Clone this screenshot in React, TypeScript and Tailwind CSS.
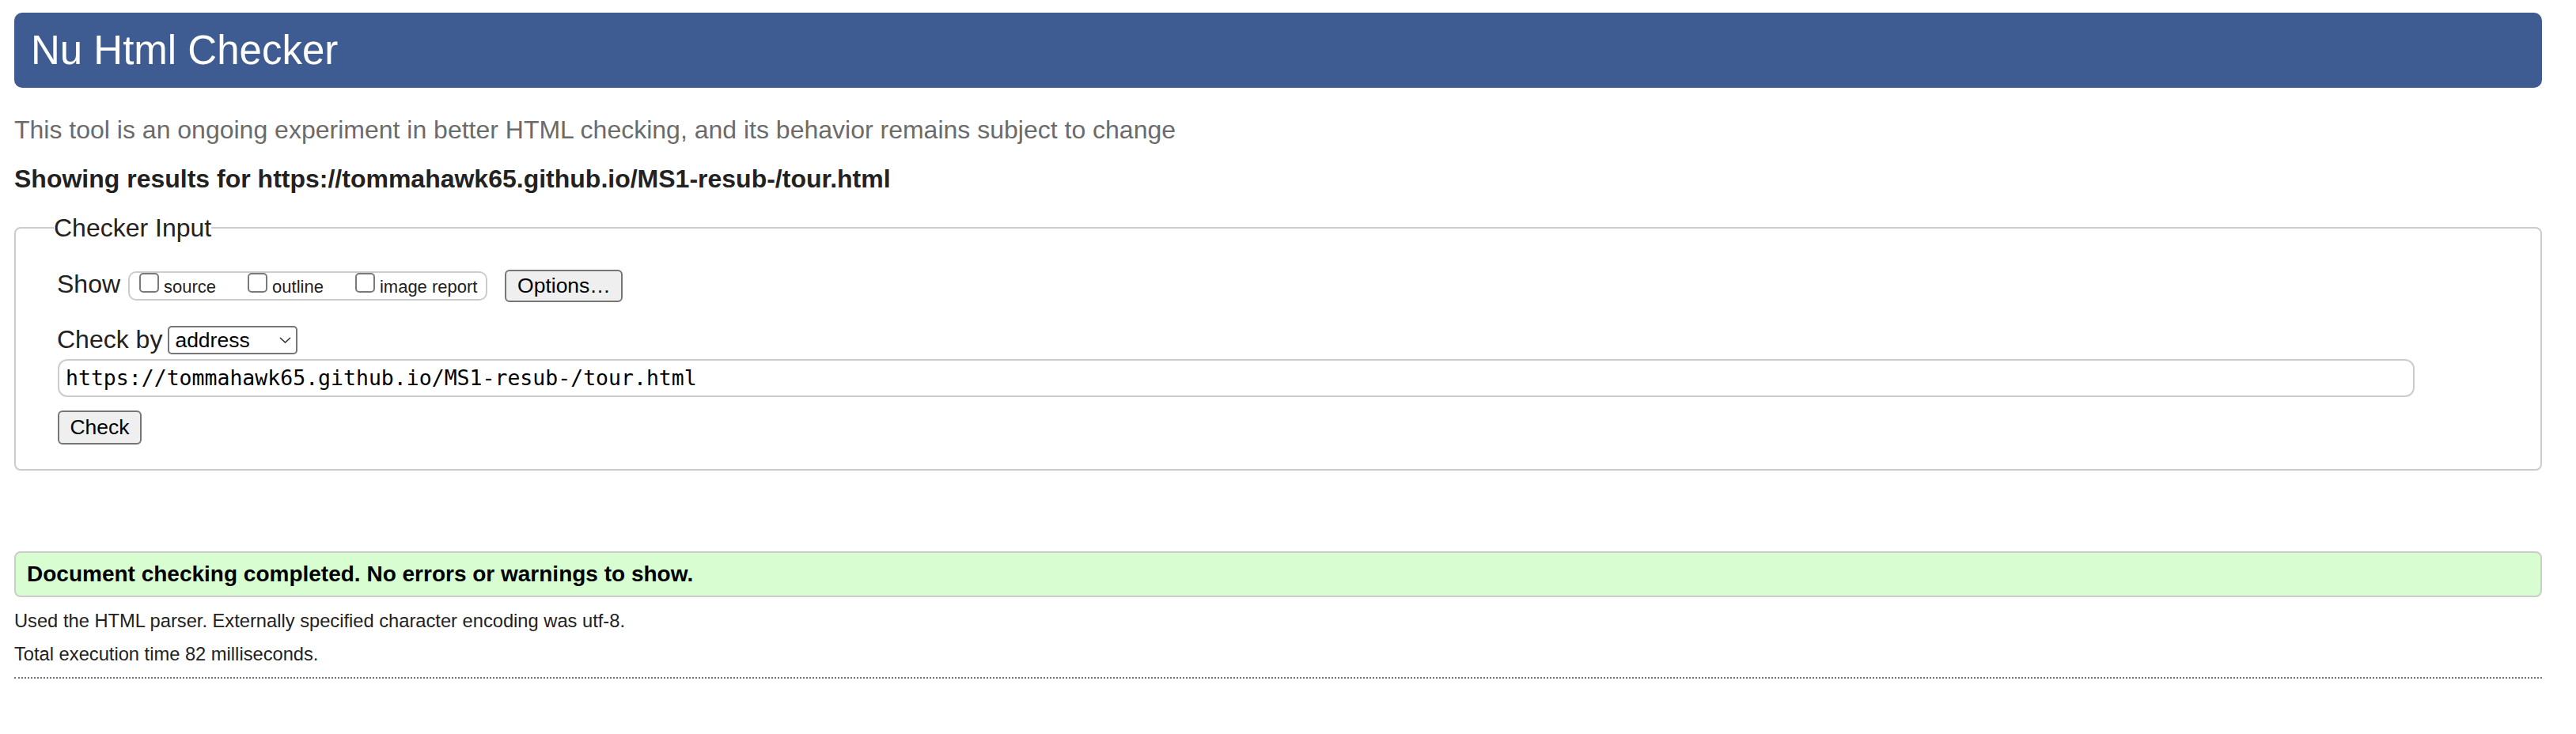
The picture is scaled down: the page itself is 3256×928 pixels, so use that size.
function Box({ label, last }: { label: string; last?: boolean }) {
  return (
    <div className={last ? 'flex items-start' : 'mr-[40px] flex items-start'}>
      <span className="block h-[25px] w-[25px] rounded-[5px] border-2 border-[#7a7a7a] bg-white" />
      <span className="ml-[6px] mt-[5px] text-[22px] leading-[25px] text-[#222]">{label}</span>
    </div>
  )
}

export default function App() {
  return (
    <div className="min-h-screen bg-white font-['Liberation_Sans',Arial,sans-serif] text-[#222]">
      <div className="ml-[18px] w-[3195px] pt-[16px]">
        {/* title bar */}
        <header className="flex h-[95px] items-center rounded-[10px] bg-[#3e5c91] pl-[21px]">
          <h1 className="text-[51px] leading-none text-white">Nu Html Checker</h1>
        </header>

        <p className="mt-[33px] text-[32px] leading-[40px] text-[#6b6b6b]">
          This tool is an ongoing experiment in better HTML checking, and its behavior remains subject to change
        </p>
        <h2 className="mt-[22px] text-[32px] font-bold leading-[40px] text-[#222]">
          Showing results for https://tommahawk65.github.io/MS1-resub-/tour.html
        </h2>

        {/* checker input */}
        <fieldset className="mt-[22px] rounded-[8px] border-2 border-[#ccc] pb-[31px] pl-[48px]">
          <legend className="text-[32px] leading-[40px] text-[#222]">Checker Input</legend>
          <div className="pl-[4px]">
            <div className="mt-[31px] flex items-start">
              <span className="text-[32px] leading-[40px]">Show</span>
              <div className="ml-[10px] mt-[4px] flex h-[37px] items-start rounded-[10px] border-2 border-[#ccc] pl-[12px] pr-[11px]">
                <Box label="source" />
                <Box label="outline" />
                <Box label="image report" last />
              </div>
              <button className="ml-[22px] mt-[2px] h-[41px] w-[149px] rounded-[6px] border-2 border-[#767676] bg-[#efefef] text-[26.5px] leading-none text-black">
                Options…
              </button>
            </div>

            <div className="mt-[27px] flex items-start">
              <span className="text-[32px] leading-[40px]">Check by</span>
              <div className="ml-[7px] mt-[3px] flex h-[36px] w-[164px] items-center rounded-[5px] border-2 border-[#767676] bg-white pl-[7px]">
                <span className="text-[26.5px] leading-none text-black">address</span>
                <svg className="ml-auto mr-[6px]" width="15" height="8" viewBox="0 0 15 8" fill="none">
                  <path d="M1 1l6.5 6L14 1" stroke="#333" strokeWidth="1.6" />
                </svg>
              </div>
            </div>

            <div className="ml-[1px] mt-[5px] flex h-[48px] w-[2979px] items-center rounded-[12px] border-2 border-[#ccc] bg-white pl-[8px]">
              <span className="font-['DejaVu_Sans_Mono',monospace] text-[26.5px] leading-none text-black">
                https://tommahawk65.github.io/MS1-resub-/tour.html
              </span>
            </div>

            <button className="ml-[1px] mt-[17px] block h-[43px] w-[106px] rounded-[6px] border-2 border-[#767676] bg-[#efefef] text-[26.5px] leading-none text-black">
              Check
            </button>
          </div>
        </fieldset>

        {/* result */}
        <div className="mt-[102px] flex h-[58px] items-center rounded-[8px] border-2 border-[#ccc] bg-[#d7fdd1] pl-[14px]">
          <p className="text-[28px] font-bold leading-[54px] text-black">
            Document checking completed. No errors or warnings to show.
          </p>
        </div>

        <p className="mt-[15px] text-[23.7px] leading-[30px] text-[#222]">
          Used the HTML parser. Externally specified character encoding was utf-8.
        </p>
        <p className="mt-[12px] text-[23.7px] leading-[30px] text-[#222]">Total execution time 82 milliseconds.</p>
        <hr className="mt-[14px] border-t-2 border-dotted border-[#777]" />
      </div>
    </div>
  )
}
